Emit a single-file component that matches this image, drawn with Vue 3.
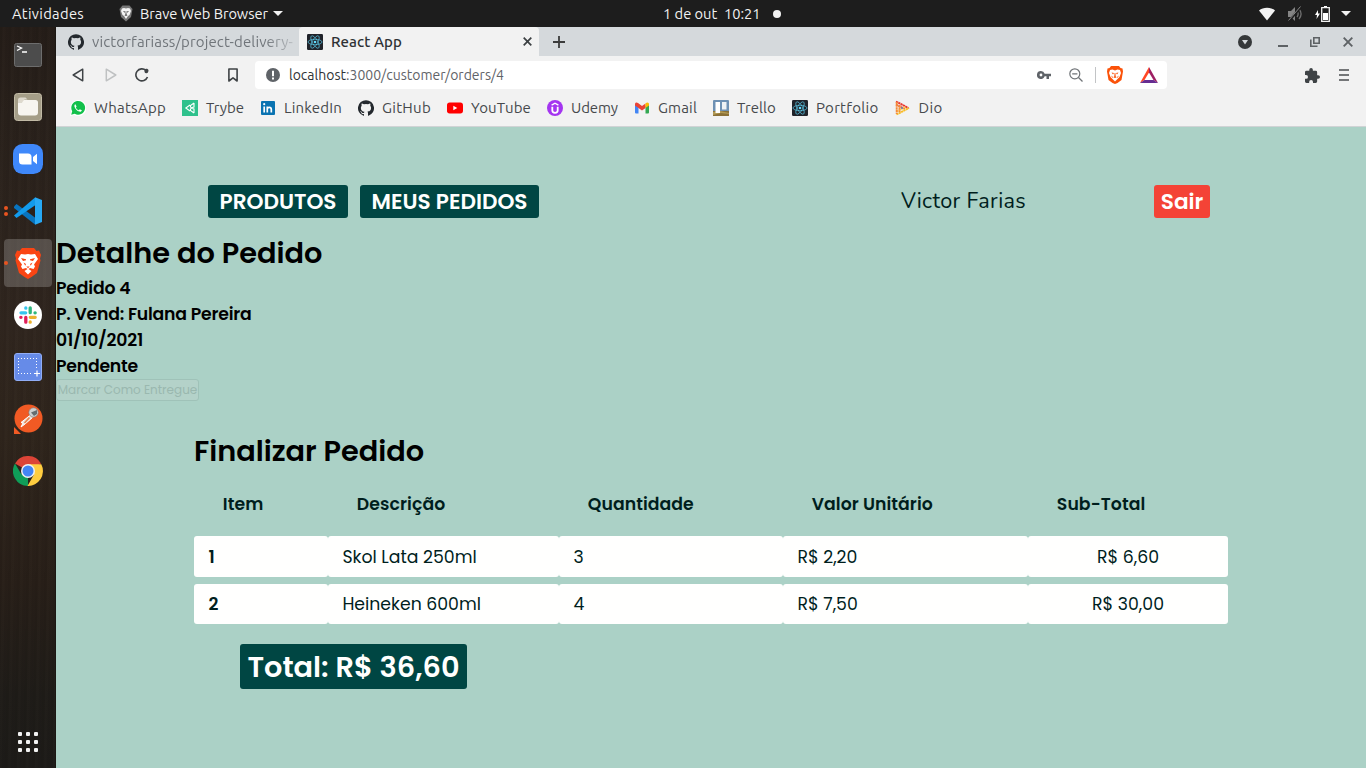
<script setup>
// Spreads a label over a given width by adjusting its letter spacing.
const vFit = {
  mounted(el, { value }) {
    const natural = el.getBoundingClientRect().width
    el.style.letterSpacing = (value - natural) / el.textContent.length + 'px'
  }
}

const bookmarks = [
  { id: 'whatsapp', name: 'WhatsApp', w: 72 },
  { id: 'trybe', name: 'Trybe', w: 38 },
  { id: 'linkedin', name: 'LinkedIn', w: 58 },
  { id: 'github', name: 'GitHub', w: 49 },
  { id: 'youtube', name: 'YouTube', w: 60 },
  { id: 'udemy', name: 'Udemy', w: 47 },
  { id: 'gmail', name: 'Gmail', w: 39 },
  { id: 'trello', name: 'Trello', w: 39 },
  { id: 'react', name: 'Portfolio', w: 62.500 },
  { id: 'dio', name: 'Dio', w: 24 }
]
const details = [
  { text: 'Pedido 4', w: 74.500 },
  { text: 'P. Vend: Fulana Pereira', w: 195.5 },
  { text: '01/10/2021', w: 87 },
  { text: 'Pendente', w: 82 }
]
const headers = [
  { text: 'Item', w: 40.500 },
  { text: 'Descrição', w: 88.500 },
  { text: 'Quantidade', w: 106 },
  { text: 'Valor Unitário', w: 121 },
  { text: 'Sub-Total', w: 88.500 }
]
const rows = [
  ['1', 'Skol Lata 250ml', '3', 'R$ 2,20', 'R$ 6,60'],
  ['2', 'Heineken 600ml', '4', 'R$ 7,50', 'R$ 30,00']
]
const githubPath = 'M12 .3a12 12 0 0 0-3.8 23.4c.6.1.8-.3.8-.6v-2c-3.3.7-4-1.6-4-1.6-.6-1.4-1.4-1.8-1.4-1.8-1-.7.1-.7.1-.7 1.2 0 1.9 1.2 1.9 1.2 1 1.8 2.8 1.3 3.5 1 0-.8.4-1.3.7-1.6-2.7-.3-5.5-1.3-5.5-6 0-1.2.5-2.3 1.3-3.1-.2-.4-.6-1.6 0-3.2 0 0 1-.3 3.4 1.2a11.5 11.5 0 0 1 6 0c2.3-1.5 3.3-1.2 3.3-1.2.6 1.6.2 2.8 0 3.2.9.8 1.3 1.9 1.3 3.2 0 4.6-2.8 5.6-5.5 5.9.5.4.9 1 .9 2.2v3.3c0 .3.1.7.8.6A12 12 0 0 0 12 .3'
</script>

<template>
  <div class="desktop">
    <header class="topbar">
      <span v-fit="72" class="activities">Atividades</span>
      <svg class="top-brave" width="14" height="17" viewBox="0 0 28 34"><path fill="#777" d="M7 1h14l6 7-3 16-10 9L4 24 1 8z" /><path fill="#f4f4f4" d="M6 7l4-1 4 1 4-1 4 1 2 5-3 8-3 2-4 6-4-6-3-2-3-8z" /><path fill="#555" d="M8 12l5 1-2 2.500zM20 12l-5 1 2 2.500zM13.300 13h1.400l.5 6 2 1.500-3.200 1.500-3.200-1.500 2-1.500z" /></svg>
      <span v-fit="128" class="app-name">Brave Web Browser</span>
      <i class="caret"></i>
      <div class="clock"><span v-fit="97.500" class="clock-text">1 de out&nbsp; 10:21</span><i class="notice"></i></div>
      <div class="status">
        <svg width="16" height="14" viewBox="0 0 16 14"><path fill="#f2f2f2" d="M0 3.5C4-.2 12-.2 16 3.5L8 13.5z" /></svg>
        <svg width="16" height="16" viewBox="0 0 16 16"><path fill="#858585" d="M1 5h3l4-4v14l-4-4H1z" /><path d="M10 5c1.5 2 1.5 4 0 6M12 3c2.5 3 2.5 7 0 10" fill="none" stroke="#707070" stroke-width="1.3" /><path d="M2 15L14 1" stroke="#1d1d1d" stroke-width="2.4" /><path d="M1.5 14.5L13.5 .5" stroke="#858585" stroke-width="1" /></svg>
        <svg width="15" height="16" viewBox="0 0 15 16"><path fill="#fff" d="M3 4L0 9h2l-.5 4L5 7.5H3zM9 0h3v1H9z" /><path d="M6.7 1.7h7.6v13.6H6.7z" fill="none" stroke="#f2f2f2" stroke-width="1.3" /><path fill="#fff" d="M8 7h5v7H8z" /></svg>
        <i class="caret"></i>
      </div>
    </header>

    <nav class="dock">
      <div class="launcher"><svg width="30" height="26" viewBox="0 0 30 26"><rect x="1.5" y="1.5" width="27" height="23" rx="2" fill="#4c4c4c" stroke="#6d6d6d" /><path d="M4 4l4.5 2L4 8.5M9 10h5" fill="none" stroke="#fff" stroke-width="1.3" /></svg></div>
      <div class="launcher"><svg width="30" height="30" viewBox="0 0 30 30"><rect x="1.5" y="1.5" width="27" height="27" rx="3" fill="#a59e88" stroke="#c2bba6" /><path fill="#ded9cd" d="M5 8q0-2.500 2.500-2.500h5l2 2h-3l-1 3H5z" /><path fill="#f7f5f0" d="M5 10.500h4l2-2.500h11.500q2.500 0 2.500 2.500v10q0 3-3 3H8q-3 0-3-3z" /></svg></div>
      <div class="launcher"><svg width="30" height="30" viewBox="0 0 30 30"><rect width="30" height="30" rx="9.500" fill="#3f88fa" /><path fill="#fff" d="M6 9.500h9q3.500 0 3.500 3.500v7.500h-9Q6 20.500 6 17zM20 13l4-3.200v10.500L20 17z" /></svg></div>
      <div class="launcher"><div class="dots"><i></i><i></i></div><svg width="28" height="28" viewBox="0 0 28 28"><path fill="#0874bf" d="M0 9.500L2.500 7 23 22l-2 5.500L0 11z" /><path fill="#129bec" d="M0 18.500L21 .5 23 7 2.500 21z" /><path fill="#27a9f5" d="M21 .2L28 3v22l-7 2.800z" /></svg></div>
      <div class="launcher active"><div class="dots"><i></i></div><svg width="26" height="32" viewBox="0 0 52 64"><path fill="#fa4514" d="M14 2h24l5 6 5-1 4 9-2 7 1 4-7 25-11 8-7 4-7-4-11-8L1 27l1-4-2-7 4-9 5 1z" /><path fill="#fff" d="M12 14l8 1 6-1 6 1 8-1 6 10-8 11 2 4-3 5-7-2-3 2 6 4-7 7-7-7 6-4-3-2-7 2-3-5 2-4-8-11z" /><path fill="#fa4514" d="M12 22l10 2.500v2l-6 1.500zM40 22l-10 2.500v2l6 1.500zM17 31l5 3-1.500 3.500zM35 31l-5 3 1.500 3.500zM23 38l3 1.500 3-1.500-1.500 3.500h-3z" /></svg></div>
      <div class="launcher"><svg width="28" height="28" viewBox="0 0 28 28"><circle cx="14" cy="14" r="14" fill="#fff" /><g stroke-width="3.300" stroke-linecap="round"><path d="M11.800 7v.2M7 11.800h4.700" stroke="#36c5f0" /><path d="M16.200 6.800v4.900M21 11.800h.2" stroke="#2eb67d" /><path d="M16.200 21v.2M16.300 16.300h4.900" stroke="#ecb22e" /><path d="M11.800 16.300v4.900M6.800 16.300H7" stroke="#e01e5a" /></g></svg></div>
      <div class="launcher"><svg width="30" height="30" viewBox="0 0 30 30"><rect x="1.500" y="1.500" width="27" height="27" rx="2.500" fill="#668be8" stroke="#91adf5" /><path d="M5 6.500h19M5 21.500h14M5.500 6v16M23.500 6v12" stroke="#fff" stroke-dasharray="1 2" fill="none" /><path d="M24 18.500v6M21 21.500h6" stroke="#fff" stroke-width="1.200" /></svg></div>
      <div class="launcher"><svg width="30" height="30" viewBox="0 0 30 30"><path fill="#f15a24" d="M1 23v7h7z" /><circle cx="15.500" cy="14.500" r="14" fill="#f15a24" /><path d="M17.500 11L8 18.500l2 .5-2 4 4-3 7.500-6.500" fill="#e9e4df" stroke="#fff" /><path d="M16.500 13.500l-5 5.500" stroke="#e98550" stroke-width="1.800" /><circle cx="20.500" cy="8.500" r="4.700" fill="#cfd1d1" stroke="#777" stroke-width=".6" /><path d="M18 8.500l6-2.500v4l-3 2z" fill="#656d70" /></svg></div>
      <div class="launcher"><svg width="30" height="30" viewBox="0 0 30 30"><path fill="#dc4437" d="M15 15L2 7.500A15 15 0 0 1 28 7.500z" /><path fill="#0f9d58" d="M15 15v15A15 15 0 0 1 2 7.500l6.500 11z" /><path fill="#ffcd40" d="M15 8.200h13.300A15 15 0 0 1 14.500 30l6.500-11.500z" /><circle cx="15" cy="15" r="7" fill="#f1f1f1" /><circle cx="15" cy="15" r="5.500" fill="#4285f4" /></svg></div>
      <div class="apps"><i v-for="n in 9" :key="n"></i></div>
    </nav>

    <main class="window">
      <div class="tabs">
        <div class="tab idle"><svg width="16" height="16" viewBox="0 0 24 24"><path fill="#24292e" :d="githubPath" /></svg><span v-fit="201" class="tab-title">victorfariass/project-delivery-</span></div>
        <div class="tab current">
          <svg width="16" height="16" viewBox="0 0 16 16"><rect width="16" height="16" rx="1.200" fill="#20232a" /><g fill="none" stroke="#61dafb" stroke-width=".6"><ellipse cx="8" cy="8" rx="7" ry="2.700" /><ellipse cx="8" cy="8" rx="7" ry="2.700" transform="rotate(60 8 8)" /><ellipse cx="8" cy="8" rx="7" ry="2.700" transform="rotate(120 8 8)" /></g><circle cx="8" cy="8" r="1.300" fill="#61dafb" /></svg>
          <span v-fit="71" class="tab-title">React App</span>
          <svg class="close" width="9" height="9" viewBox="0 0 9 9"><path d="M.7.700l7.600 7.600M8.300.700L.7 8.300" stroke="#3c4043" stroke-width="1.700" /></svg>
        </div>
        <svg class="new-tab" width="12" height="12" viewBox="0 0 12 12"><path d="M6 0v12M0 6h12" stroke="#3b3b3b" stroke-width="1.800" /></svg>
        <div class="controls">
          <svg width="14" height="14" viewBox="0 0 14 14"><circle cx="7" cy="7" r="7" fill="#35383a" /><path d="M4 5h6L7 9.500z" fill="#d5d9dc" /></svg>
          <svg width="10" height="14" viewBox="0 0 10 14"><path d="M0 11h10" stroke="#5e6265" stroke-width="2" /></svg>
          <svg width="10" height="10" viewBox="0 0 10 10"><path d="M3.800.8h5.400v5.400H3.800z" fill="none" stroke="#5e6265" stroke-width="1.600" /><path d="M.8 2.500v6.700H7.500" fill="none" stroke="#5e6265" stroke-width="1.600" /></svg>
          <svg width="10" height="10" viewBox="0 0 10 10"><path d="M.7.700l8.600 8.600M9.300.700L.7 9.300" stroke="#5e6265" stroke-width="1.900" /></svg>
        </div>
      </div>

      <div class="toolbar">
        <svg class="back" width="12" height="14" viewBox="0 0 12 14"><path d="M10.700 1.200v11.600L1.200 7z" fill="none" stroke="#3f4346" stroke-width="1.500" stroke-linejoin="round" /></svg>
        <svg class="forward" width="12" height="14" viewBox="0 0 12 14"><path d="M1.300 1.200v11.600L10.800 7z" fill="none" stroke="#bfc1c2" stroke-width="1.500" stroke-linejoin="round" /></svg>
        <svg class="reload" width="14" height="14" viewBox="0 0 14 14"><path d="M12.500 9A6 6 0 1 1 11 2.500" fill="none" stroke="#3f4346" stroke-width="1.600" /><path d="M9.500 2a2 2 0 1 1 3.800 1.500 2 2 0 0 1-3.800.5z" fill="#3f4346" /></svg>
        <svg class="save" width="10" height="14" viewBox="0 0 10 14"><path d="M.9 1h8.200v12L5 9.800.9 13z" fill="none" stroke="#3f4346" stroke-width="1.600" stroke-linejoin="round" /></svg>
        <div class="omnibox">
          <svg width="14" height="14" viewBox="0 0 14 14"><circle cx="7" cy="7" r="7" fill="#5f6368" /><path d="M7 2.800v5.400M7 9.600v1.800" stroke="#fff" stroke-width="2" /></svg>
          <span v-fit="215" class="url"><b>localhost</b>:3000/customer/orders/4</span>
          <div class="omni-icons">
            <svg width="14" height="8" viewBox="0 0 14 8"><path fill="#5f6368" fill-rule="evenodd" d="M4 0a4 4 0 1 0 3.700 5.300H9.500V8H12V5.300h2V2.700H7.700A4 4 0 0 0 4 0m0 2.600a1.400 1.400 0 1 1 0 2.800 1.400 1.400 0 0 1 0-2.800" /></svg>
            <svg width="14" height="14" viewBox="0 0 14 14"><circle cx="5.800" cy="5.800" r="5" fill="none" stroke="#707478" stroke-width="1.200" /><path d="M3.200 5.800h5.200M9.500 9.500l4 4" stroke="#707478" stroke-width="1.300" /></svg>
            <i class="divider"></i>
            <svg width="16" height="18" viewBox="0 0 32 36"><path fill="#fb5209" d="M8 0h16l3 4 4 1 1 6-3 17-8 6-5 2-5-2-8-6L0 11l1-6 4-1z" /><path fill="#fff" d="M6 8l5-1 5 2 5-2 5 1 2 6-3 8-5 5-4 4-4-4-5-5-3-8z" /><path fill="#fb5209" d="M9 13l5 1-2 3zM23 13l-5 1 2 3zM15.200 14h1.600l.7 7 2 1.500-3.500 1.500-3.500-1.500 2-1.500zM8 19l4 3-1 2zM24 19l-4 3 1 2z" /></svg>
            <svg width="18" height="16" viewBox="0 0 36 32"><path fill="#ff4724" d="M18 0v11L9 26 0 32z" /><path fill="#9e1f63" d="M18 0l18 32-9-6-9-15z" /><path fill="#662d91" d="M0 32l9-6h18l9 6z" /></svg>
          </div>
        </div>
        <svg class="puzzle" width="15" height="15" viewBox="2 1 21 21"><path fill="#3f4346" d="M20.500 11H19V7a2 2 0 0 0-2-2h-4V3.500a2.500 2.500 0 0 0-5 0V5H4a2 2 0 0 0-2 2v3.800h1.500a2.700 2.700 0 0 1 0 5.400H2V20a2 2 0 0 0 2 2h3.800v-1.500a2.700 2.700 0 0 1 5.400 0V22H17a2 2 0 0 0 2-2v-4h1.500a2.500 2.500 0 0 0 0-5z" /></svg>
        <svg class="menu" width="10" height="12" viewBox="0 0 10 12"><path d="M0 1h10M0 6h10M0 11h10" stroke="#4b4e50" stroke-width="1.700" /></svg>
      </div>

      <div class="bookmarks">
        <div v-for="b in bookmarks" :key="b.id" class="bookmark">
          <svg width="16" height="16" viewBox="0 0 16 16">
            <template v-if="b.id === 'whatsapp'"><path fill="#fff" d="M0 16l1.200-4.300A8 8 0 1 1 4.300 15z" /><path fill="#12c04b" d="M1.200 14.800l1-3.600a6.900 6.900 0 1 1 2.600 2.600z" /><path fill="#fff" d="M5.400 4.200c-.8.300-1.300 1.400-.8 2.700.8 2.200 2.400 3.900 4.700 4.700 1.300.4 2.300-.2 2.500-1.400l-2-1-.9 1.100C7.600 9.900 6.400 8.800 5.800 7.400l.8-1z" /></template>
            <template v-else-if="b.id === 'trybe'"><rect width="16" height="16" fill="#2fc18c" /><path fill="none" stroke="#fff" stroke-width="1.100" d="M8 5L3.800 8 8 11M12 3v4L8 8l4 1v4M12 3L8.500 5.500V7M12 13l-3.500-2.500V9" /></template>
            <template v-else-if="b.id === 'linkedin'"><rect x="1" y="1" width="14" height="14" rx="1" fill="#0a73b1" /><path d="M4.200 6.500v6M7.300 6.500v6M7.300 9c0-2 4-2.500 4 .5v3" fill="none" stroke="#fff" stroke-width="1.700" /><circle cx="4.200" cy="4.200" r="1.100" fill="#fff" /></template>
            <path v-else-if="b.id === 'github'" fill="#24292e" transform="scale(.6667)" :d="githubPath" />
            <template v-else-if="b.id === 'youtube'"><rect y="2.500" width="16" height="11" rx="2.700" fill="red" /><path fill="#fff" d="M6.300 5.700v4.600l4-2.300z" /></template>
            <template v-else-if="b.id === 'udemy'"><circle cx="8" cy="8" r="8" fill="#a435f0" /><path d="M5.300 6.800v3.800c0 2.900 5.400 2.900 5.400 0V6.800" fill="none" stroke="#fff" stroke-width="1.800" /><path d="M4.600 5.200L8 3.200l3.400 2" fill="none" stroke="#fff" stroke-width="1.400" /></template>
            <template v-else-if="b.id === 'gmail'"><path fill="#4285f4" d="M1 4v8.500q0 1 1 1h2.500V6z" /><path fill="#34a853" d="M11.500 6v7.500H14q1 0 1-1V4z" /><path fill="#ea4335" d="M1 4.300C1 2 3 2.200 4 3l4 3 3.500-2.600V8L8 10.500 4.500 8 1 5.500z" /><path fill="#fbbc04" d="M11.500 3.400C13.500 1.800 15 2.800 15 4.300v1.200L11.500 8z" /></template>
            <template v-else-if="b.id === 'trello'"><rect width="16" height="16" rx="1" fill="#6e91b4" /><path fill="#8b7137" d="M0 11h16v5H0z" /><path fill="#b29a55" d="M0 12l7-1 9 2v1l-8-1-8 2z" /><rect x="2.500" y="2" width="4.500" height="11" fill="#fff" /><rect x="9" y="2" width="4.500" height="7.500" fill="#eef2f5" /></template>
            <template v-else-if="b.id === 'react'"><rect width="16" height="16" rx="1.200" fill="#20232a" /><g fill="none" stroke="#61dafb" stroke-width=".6"><ellipse cx="8" cy="8" rx="7" ry="2.700" /><ellipse cx="8" cy="8" rx="7" ry="2.700" transform="rotate(60 8 8)" /><ellipse cx="8" cy="8" rx="7" ry="2.700" transform="rotate(120 8 8)" /></g><circle cx="8" cy="8" r="1.300" fill="#61dafb" /></template>
            <template v-else><g fill="none" stroke-width="1.900" stroke-dasharray="2.200 .4"><path d="M1 1.500l12.500 6.500" stroke="#e8352e" /><path d="M1 4.500l9 4.500" stroke="#f05a35" /><path d="M1.500 14.500L14 8" stroke="#f9bd25" /><path d="M1.500 11.500L10 7" stroke="#fad052" /><path d="M1.700 2v12M4.500 5v7" stroke="#f48a39" /></g><circle cx="7" cy="8" r="1" fill="#5b78b7" /></template>
          </svg>
          <span v-fit="b.w">{{ b.name }}</span>
        </div>
      </div>

      <section class="page">
        <div class="menu-row">
          <button class="nav-btn products"><span v-fit="117">PRODUTOS</span></button>
          <button class="nav-btn orders"><span v-fit="156">MEUS PEDIDOS</span></button>
          <span v-fit="125" class="user">Victor Farias</span>
          <button class="nav-btn logout">Sair</button>
        </div>

        <h1><span v-fit="266.500">Detalhe do Pedido</span></h1>
        <p v-for="d in details" :key="d.text" class="detail"><span v-fit="d.w">{{ d.text }}</span></p>
        <button class="deliver" disabled>Marcar Como Entregue</button>

        <div class="order">
          <h1><span v-fit="230">Finalizar Pedido</span></h1>
          <div class="grid head"><div v-for="h in headers" :key="h.text"><span v-fit="h.w">{{ h.text }}</span></div></div>
          <div v-for="r in rows" :key="r[0]" class="grid row"><div v-for="c in r" :key="c" class="cell">{{ c }}</div></div>
          <div class="total"><span v-fit="212">Total: R$ 36,60</span></div>
        </div>
      </section>
    </main>
  </div>
</template>

<style>
html, body { margin: 0; overflow: hidden; }
</style>

<style scoped>
* { box-sizing: border-box; }
.desktop { width: 1366px; height: 768px; display: grid; grid-template: 27px 741px / 56px 1310px; overflow: hidden; font-family: Ubuntu, "Noto Sans", sans-serif; }
svg { display: block; flex: none; }
span { white-space: nowrap; display: inline-block; }
.topbar { grid-column: 1 / 3; background: #1d1d1d; color: #f2f2f2; display: flex; align-items: center; font-size: 14.67px; line-height: 27px; }
.activities { margin-left: 12px; }
.top-brave { margin-left: 35px; }
.app-name { margin-left: 7px; }
.caret { width: 0; height: 0; border: 5px solid transparent; border-top-color: #f2f2f2; border-bottom: 0; margin-left: 5px; }
.clock { margin-left: 380px; display: flex; align-items: center; }
.notice { width: 8px; height: 8px; border-radius: 50%; background: #f2f2f2; margin-left: 12.500px; }
.status { margin-left: auto; margin-right: 15px; display: flex; align-items: center; gap: 12px; }
.status .caret { margin-left: -1px; }

.dock { padding-top: 4px; display: flex; flex-direction: column; gap: 4px; align-items: center; background: repeating-linear-gradient(91deg, rgba(0,0,0,.05) 0 2px, rgba(255,255,255,.008) 3px 5px, rgba(0,0,0,.02) 6px 9px), linear-gradient(#251d18 0, #29211b 12%, #30261f 40%, #2f251c 55%, #281f18 75%, #1f1c18 90%, #1d1b18 100%); border-right: 1px solid #1b1713; }
.launcher { width: 48px; height: 48px; border-radius: 4px; display: flex; align-items: center; justify-content: center; position: relative; }
.active { background: rgba(255,255,255,.2); }
.dots { position: absolute; left: 0; top: 0; height: 48px; display: flex; flex-direction: column; justify-content: center; gap: 2px; }
.dots i { width: 4px; height: 4px; border-radius: 50%; background: #e95420; }
.apps { margin-top: auto; margin-bottom: 16px; display: grid; grid-template-columns: repeat(3, 4px); gap: 4px; }
.apps i { width: 4px; height: 4px; border-radius: 1px; background: #f2f2f2; }

.window { display: flex; flex-direction: column; background: #f2f2f2; min-width: 0; }
.tabs { height: 29px; background: #d5d9dc; display: flex; align-items: center; font-size: 15px; line-height: 29px; }
.tab { height: 29px; display: flex; align-items: center; }
.idle { width: 243px; padding-left: 12px; color: #70757a; }
.idle .tab-title { -webkit-mask-image: linear-gradient(90deg, #000 86%, rgba(0,0,0,.25)); mask-image: linear-gradient(90deg, #000 86%, rgba(0,0,0,.25)); }
.tab-title { margin-left: 8px; }
.current { width: 240px; padding-left: 8px; background: #f2f2f2; border-radius: 4px 4px 0 0; color: #2e3134; font-weight: 500; }
.close { margin-left: auto; margin-right: 7px; }
.new-tab { margin-left: 14px; }
.controls { margin-left: auto; margin-right: 13px; display: flex; align-items: center; }
.controls svg + svg { margin-left: 26px; }
.controls svg + svg + svg { margin-left: 22px; }
.controls svg + svg + svg + svg { margin-left: 23px; }

.toolbar { height: 38px; display: flex; align-items: center; }
.back { margin-left: 16px; }
.forward { margin-left: 21px; }
.reload { margin-left: 18px; }
.save { margin-left: 79px; }
.omnibox { margin-left: 17px; width: 912px; height: 28px; border-radius: 4px; background: #fff; padding: 0 9px 0 11px; display: flex; align-items: center; font-size: 14px; color: #5f6368; }
.url { margin-left: 9px; }
.url b { font-weight: 400; color: #303336; }
.omni-icons { margin-left: auto; display: flex; align-items: center; }
.omni-icons svg + svg { margin-left: 18px; }
.divider { width: 1px; height: 16px; background: #c2c4c6; margin: 0 11px 0 12px; }
.omni-icons .divider + svg + svg { margin-left: 17px; }
.puzzle { margin-left: 138px; }
.menu { margin-left: 19px; }
.bookmarks { height: 33px; padding: 0 0 5px 14px; border-bottom: 1px solid #d0d3d5; display: flex; align-items: center; gap: 16px; font-size: 15px; color: #46494c; }
.bookmark { display: flex; align-items: center; gap: 8px; line-height: 26px; }

.page { height: 641px; background: #abd1c6; color: #000; font-family: Poppins, Inter, sans-serif; font-weight: 600; line-height: 1.5; white-space: nowrap; }
button { font: inherit; border: 0; padding: 0; }
.menu-row { height: 105px; padding-top: 58px; display: flex; }
.nav-btn { height: 33px; border-radius: 3px; background: #004643; color: #fffffe; font-size: 21.6px; line-height: 33px; text-align: center; }
.products { width: 140px; margin-left: 152px; }
.orders { width: 179px; margin-left: 12px; }
.user { margin-left: 362px; font-family: Nunito, "Noto Sans", sans-serif; font-size: 21.6px; font-weight: 400; line-height: 32px; color: #001e1d; }
.logout { width: 56px; margin-left: auto; margin-right: 156px; background: #f44336; }
h1 { margin: 0; font-size: 28.8px; line-height: 43px; font-weight: 600; height: 43px; }
.detail { margin: 0; font-size: 17.28px; line-height: 26px; height: 26px; }
.deliver { display: block; width: 143px; height: 22px; border: 1px solid #9fc2b8; border-radius: 3px; background: #b4d2c9; color: #9ab8af; font-size: 12px; font-weight: 400; line-height: 20px; text-align: center; }
.order { margin: 29px 0 0 138px; width: 1034px; color: #001e1d; font-size: 17.28px; }
.order h1 { color: #000; }
.grid { display: grid; grid-template-columns: 134px 231px 224px 245px 200px; }
.head { height: 63px; line-height: 62px; }
.head div { padding-left: 28.800px; }
.row { height: 41px; margin-bottom: 7px; line-height: 40px; font-weight: 400; }
.row + .row { height: 40px; margin-bottom: 20px; }
.cell { background: #fffffe; border-radius: 3px; padding: 1px 0 0 14.400px; }
.row + .row .cell { padding-top: 0; }
.cell:first-child { font-weight: 600; }
.cell:last-child { padding-left: 0; text-align: center; }
.total { margin-left: 46px; width: 227px; height: 45px; border-radius: 3px; background: #004643; color: #fffffe; font-size: 28.8px; line-height: 46px; font-weight: 600; text-align: center; }
</style>
